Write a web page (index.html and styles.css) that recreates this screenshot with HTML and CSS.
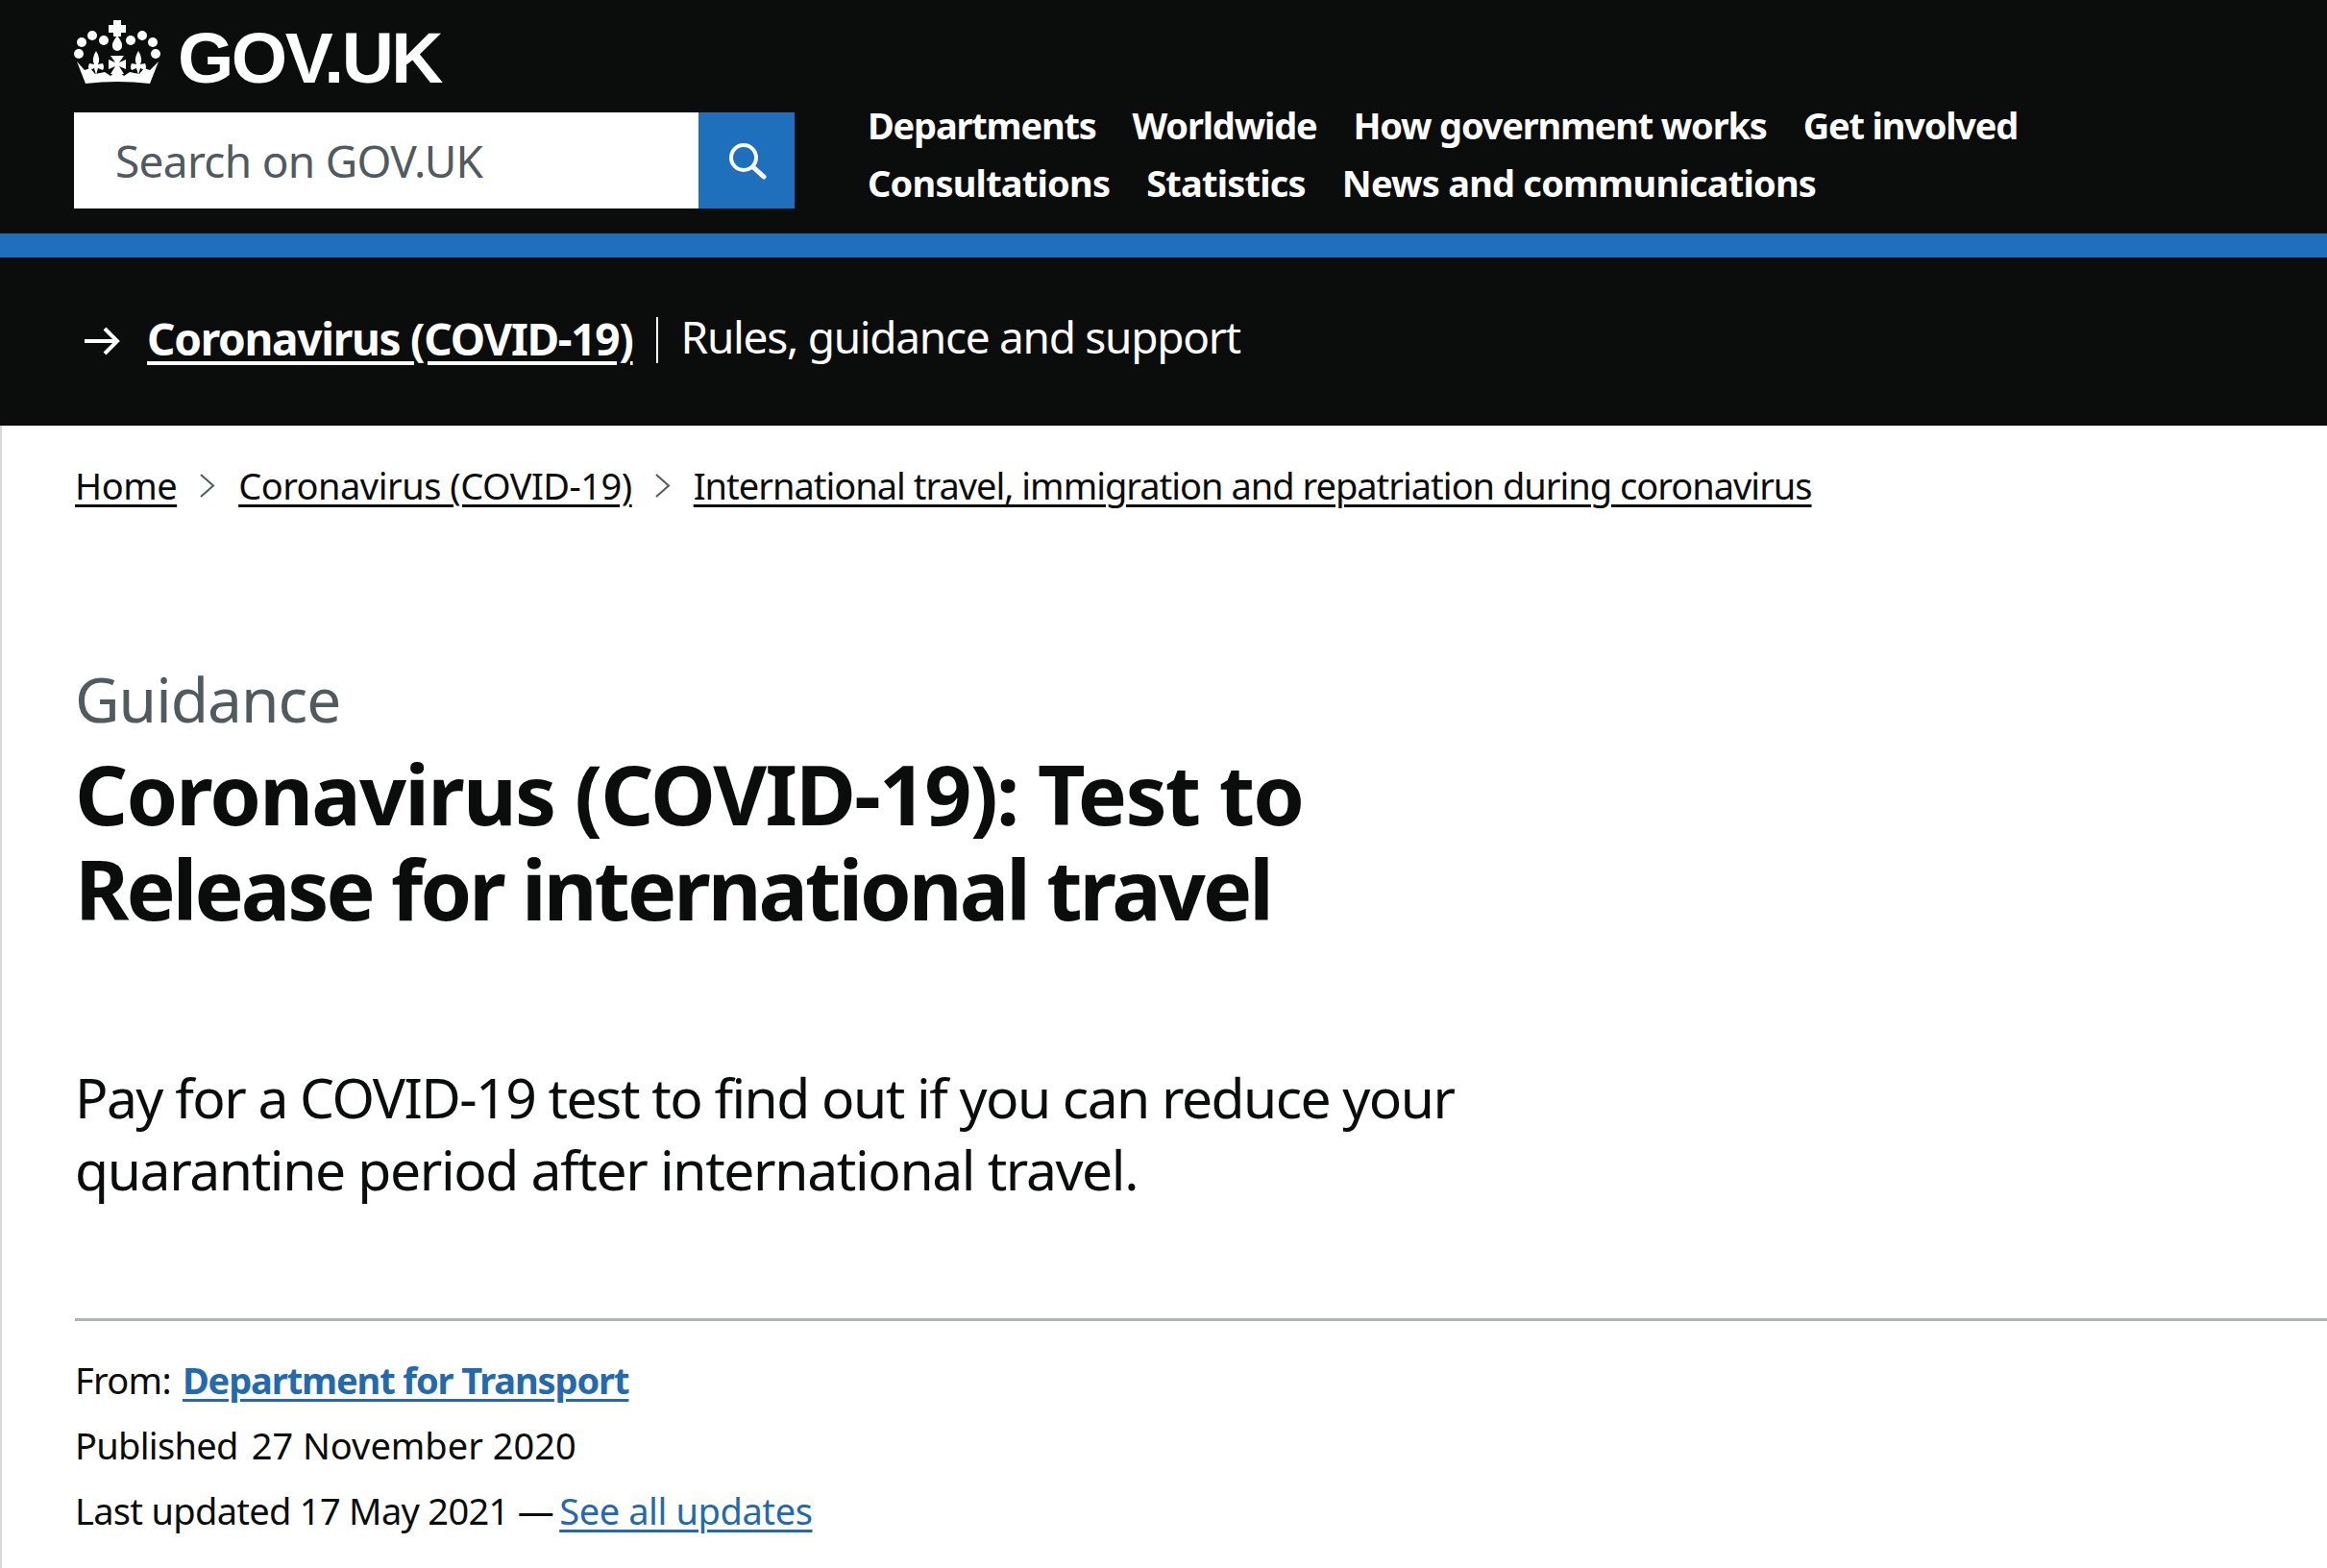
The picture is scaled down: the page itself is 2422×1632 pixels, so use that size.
FILE: index.html
```html
<!DOCTYPE html>
<html lang="en">
<head>
  <meta charset="UTF-8">
  <title>Coronavirus (COVID-19): Test to Release for international travel - GOV.UK</title>
  <link rel="stylesheet" href="styles.css">
</head>
<body>

  <header class="header">
    <div class="logo">
      <svg class="crown" viewBox="0 0 91 66" width="91" height="66" fill="#fff">
        <path d="M41 0h8v5h5v8h-5v4h-8v-4h-5V5h5z"/>
        <path d="M45 16q6 8 5 11a5 5 0 0 1-10 0q-1-3 5-11z"/>
        <circle cx="31" cy="21" r="5"/><circle cx="19" cy="16" r="5"/><circle cx="8" cy="23" r="5"/><circle cx="5" cy="35" r="5"/>
        <circle cx="59" cy="21" r="5"/><circle cx="71" cy="16" r="5"/><circle cx="82" cy="23" r="5"/><circle cx="85" cy="35" r="5"/>
        <path d="M3 43l9 23q33-4 67 0l9-23-9 9-6-2-5 6-10-2-6 4-7-6-7 6-6-4-10 2-5-6-6 2z"/>
        <path d="M23 32q5 8 2 14l5-1q2 4 0 7l-5-2-2 7-2-7-5 2q-2-3 0-7l5 1q-3-6 2-14z"/>
        <path d="M67 32q5 8 2 14l5-1q2 4 0 7l-5-2-2 7-2-7-5 2q-2-3 0-7l5 1q-3-6 2-14z"/>
        <path d="M38 37h14l-5 7 7-3v10l-7-3 5 8H38l5-8-7 3V41l7 3z"/>
      </svg>
      <span class="logo-text">GOV.UK</span>
    </div>
    <div class="header-row">
      <form class="search">
        <span class="search-input">Search on GOV.UK</span>
        <span class="search-btn">
          <svg viewBox="0 0 42 42" width="42" height="42" fill="none" stroke="#fff" stroke-linecap="round">
            <circle cx="18" cy="18" r="13" stroke-width="4"/>
            <path d="M28 28l11 10" stroke-width="5"/>
          </svg>
        </span>
      </form>
      <nav class="nav">
        <div class="nav-row">
          <a>Departments</a><a>Worldwide</a><a>How government works</a><a>Get involved</a>
        </div>
        <div class="nav-row nav-row-wide">
          <a>Consultations</a><a>Statistics</a><a>News and communications</a>
        </div>
      </nav>
    </div>
  </header>
  <div class="blue-bar"></div>

  <div class="banner">
    <svg class="arrow" viewBox="0 0 37 30" width="37" height="30" fill="none" stroke="#fff" stroke-width="4">
      <path d="M0 15h34M21 2l13 13-13 13"/>
    </svg>
    <a class="banner-link">Coronavirus (COVID-19)</a>
    <span class="banner-text">Rules, guidance and support</span>
  </div>

  <main class="main">
    <div class="breadcrumbs">
      <a>Home</a>
      <svg class="chevron" viewBox="0 0 16 25" width="16" height="25"><path d="M1 1l13 11.500-13 11.500"/></svg>
      <a>Coronavirus (COVID-19)</a>
      <svg class="chevron" viewBox="0 0 16 25" width="16" height="25"><path d="M1 1l13 11.500-13 11.500"/></svg>
      <a class="crumb-long">International travel, immigration and repatriation during coronavirus</a>
    </div>

    <p class="caption">Guidance</p>
    <h1 class="title">Coronavirus (COVID-19): Test to<br><span class="title-tight">Release for international travel</span></h1>
    <p class="lead">Pay for a COVID-19 test to find out if you can reduce your<br><span class="lead-wide">quarantine period after international travel.</span></p>

    <div class="meta">
      <p><span class="meta-label">From:</span><a class="link-bold">Department for Transport</a></p>
      <p><span class="meta-label">Published</span><span class="meta-date">27 November 2020</span></p>
      <p>Last updated 17 May 2021 — <a class="link">See all updates</a></p>
    </div>
  </main>

</body>
</html>
```

FILE: styles.css
```css
* {
  box-sizing: border-box;
}

body {
  margin: 0;
  font-family: "Noto Sans", Roboto, sans-serif;
  background: #fff;
  color: #0b0c0c;
}

p, h1 {
  margin: 0;
}

a {
  color: inherit;
  text-decoration: underline;
}

.header {
  background: #0b0c0c;
  height: 243px;
  padding: 21px 0 0 77px;
  color: #fff;
}

.logo {
  display: flex;
  align-items: flex-end;
  gap: 17px;
  height: 66px;
}

.logo-text {
  font-family: "Liberation Sans", sans-serif;
  font-size: 75px;
  line-height: 66px;
  font-weight: bold;
  letter-spacing: -2.5px;
  margin-bottom: -6px;
}

.header-row {
  display: flex;
  margin-top: 30px;
}

.search {
  display: flex;
  width: 750px;
  height: 100px;
}

.search-input {
  flex: 1;
  background: #fff;
  color: #505a5f;
  font-size: 46px;
  letter-spacing: -0.7px;
  line-height: 100px;
  padding-left: 43px;
}

.search-btn {
  width: 100px;
  background: #1f70bc;
  display: flex;
  align-items: center;
  justify-content: center;
}

.nav {
  margin-left: 76px;
  margin-top: -17px;
  font-size: 38px;
  font-weight: bold;
  letter-spacing: -1.2px;
  line-height: 60px;
}

.nav-row {
  display: flex;
  gap: 38px;
}

.nav-row-wide {
  letter-spacing: -0.8px;
}

.nav a {
  text-decoration: none;
}

.blue-bar {
  height: 25px;
  background: #1f70bc;
}

.banner {
  background: #0b0c0c;
  height: 175px;
  padding: 0 0 8px 88px;
  display: flex;
  align-items: center;
  color: #fff;
  font-size: 46px;
  letter-spacing: -1.3px;
}

.arrow {
  margin: 6px 28px 0 0;
}

.banner-link {
  font-weight: bold;
  padding-right: 24px;
  text-decoration-thickness: 4px;
  text-underline-offset: 6px;
}

.banner-text {
  border-left: 2px solid #fff;
  height: 48px;
  margin-top: 5px;
  line-height: 40px;
  padding-left: 24px;
}

.main {
  border-left: 2px solid #d8d8d8;
  padding: 36px 0 0 76px;
  min-height: 1189px;
}

.breadcrumbs {
  display: flex;
  align-items: center;
  gap: 24px;
  font-size: 38px;
  letter-spacing: -0.5px;
  line-height: 52px;
}

.breadcrumbs a {
  text-decoration-thickness: 3px;
  text-underline-offset: 5px;
}

.crumb-long {
  letter-spacing: -1px;
}

.chevron {
  fill: none;
  stroke: #505a5f;
  stroke-width: 2;
}

.caption {
  margin-top: 159px;
  font-size: 64px;
  letter-spacing: -1px;
  line-height: 76px;
  color: #505a5f;
}

.title {
  margin-top: 10px;
  font-size: 86px;
  letter-spacing: -1.8px;
  line-height: 99px;
  font-weight: bold;
}

.title-tight {
  letter-spacing: -3px;
}

.lead {
  margin-top: 131px;
  font-size: 57px;
  letter-spacing: -1.55px;
  line-height: 75px;
  padding-bottom: 117px;
  border-bottom: 3px solid #b1b4b6;
}

.lead-wide {
  letter-spacing: -1.37px;
}

.meta {
  margin-top: 27px;
  font-size: 38px;
  letter-spacing: -0.7px;
  line-height: 68px;
}

.meta-label {
  margin-right: 12px;
}

.meta-date {
  margin-left: 2px;
  letter-spacing: 0;
}

.link-bold {
  color: #2369ad;
  font-weight: bold;
  letter-spacing: -1.1px;
  text-decoration-thickness: 3px;
  text-underline-offset: 5px;
}

.link {
  color: #2369ad;
  letter-spacing: -0.4px;
  margin-left: -3px;
  text-decoration-thickness: 3px;
  text-underline-offset: 5px;
}
```
